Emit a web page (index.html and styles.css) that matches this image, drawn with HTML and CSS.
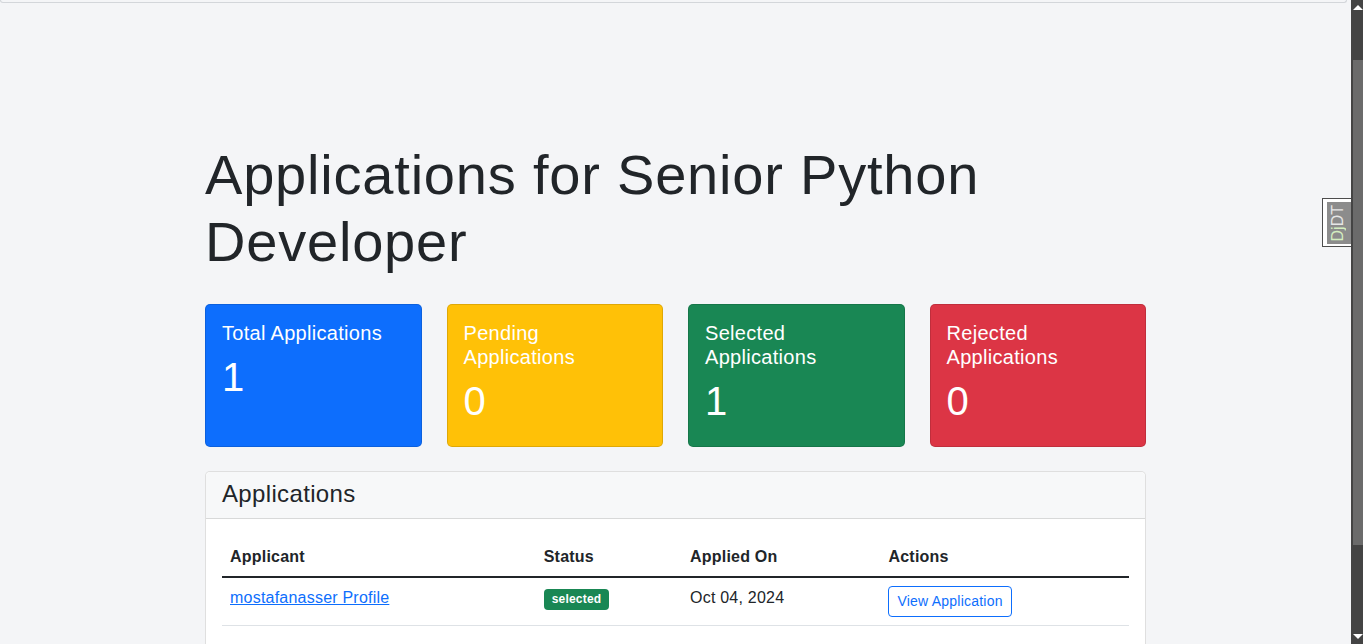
FILE: index.html
```html
<!DOCTYPE html>
<html lang="en">
<head>
<meta charset="utf-8">
<title>Applications for Senior Python Developer</title>
<link rel="stylesheet" href="styles.css">
</head>
<body>
<div class="page">
  <header class="topbar"></header>
  <main class="container">
    <h1 class="page-title">Applications for Senior Python Developer</h1>
    <section class="stats">
      <div class="stat stat-blue">
        <h5 class="stat-title">Total Applications</h5>
        <p class="stat-num">1</p>
      </div>
      <div class="stat stat-yellow">
        <h5 class="stat-title">Pending Applications</h5>
        <p class="stat-num">0</p>
      </div>
      <div class="stat stat-green">
        <h5 class="stat-title">Selected Applications</h5>
        <p class="stat-num">1</p>
      </div>
      <div class="stat stat-red">
        <h5 class="stat-title">Rejected Applications</h5>
        <p class="stat-num">0</p>
      </div>
    </section>
    <section class="panel">
      <div class="panel-header"><h4 class="panel-title">Applications</h4></div>
      <div class="panel-body">
        <table class="apps">
          <colgroup>
            <col class="c1"><col class="c2"><col class="c3"><col class="c4">
          </colgroup>
          <thead>
            <tr><th>Applicant</th><th>Status</th><th>Applied On</th><th>Actions</th></tr>
          </thead>
          <tbody>
            <tr>
              <td><a href="#" class="link">mostafanasser Profile</a></td>
              <td><span class="badge">selected</span></td>
              <td>Oct 04, 2024</td>
              <td><a href="#" class="btn-outline">View Application</a></td>
            </tr>
          </tbody>
        </table>
      </div>
    </section>
  </main>
  <div class="djdt"><div class="djdt-btn"><span class="djdt-text"><span class="djdt-d">Dj</span>DT</span></div></div>
</div>
<aside class="scrollbar">
  <div class="sb-btn"><span class="arrow-up"></span></div>
  <div class="sb-track">
    <div class="sb-thumb"></div>
  </div>
  <div class="sb-btn"><span class="arrow-down"></span></div>
</aside>
</body>
</html>
```

FILE: styles.css
```css
* { box-sizing: border-box; }
html, body { height: 100%; }
body {
  margin: 0;
  display: flex;
  overflow: hidden;
  background: #f4f5f7;
  color: #212529;
  font-family: "Liberation Sans", Arial, sans-serif;
  font-size: 16px;
  line-height: 1.5;
}
.page {
  position: relative;
  flex: 1;
  min-width: 0;
  height: 100%;
  overflow: hidden;
}
.topbar {
  height: 3px;
  margin-right: 4px;
  border: 1px solid #d3d6da;
  border-top: 0;
  border-radius: 0 0 5px 5px;
}
.container {
  width: 941px;
  margin: 0 auto;
  padding: 138px 0 110px;
}
.page-title {
  margin: 0 0 29px;
  font-size: 56px;
  font-weight: 300;
  line-height: 1.2;
  letter-spacing: 0.8px;
}
.stats {
  display: grid;
  grid-template-columns: repeat(4, 1fr);
  gap: 25px;
  margin-bottom: 24px;
}
.stat {
  color: #fff;
  border: 1px solid rgba(0,0,0,0.125);
  border-radius: 5px;
  padding: 16px 16px 21px 16px;
}
.stat-blue { background: #0d6efd; }
.stat-yellow { background: #ffc107; }
.stat-green { background: #198754; }
.stat-red { background: #dc3545; }
.stat-title {
  margin: 0 0 8px;
  font-size: 20px;
  font-weight: 400;
  line-height: 1.2;
  letter-spacing: 0.3px;
}
.stat-num {
  margin: 2px 0 0;
  font-size: 40px;
  line-height: 1.2;
}
.panel {
  background: #fff;
  border: 1px solid rgba(0,0,0,0.125);
  border-radius: 5px;
}
.panel-header {
  background: #f7f8f9;
  border-bottom: 1px solid rgba(0,0,0,0.125);
  padding: 8px 16px 9px;
  border-radius: 5px 5px 0 0;
}
.panel-title {
  margin: 0;
  font-size: 24px;
  font-weight: 400;
  line-height: 1.2;
  letter-spacing: 0.35px;
}
.panel-body { padding: 18px 16px 40px; }
.apps {
  width: 100%;
  border-collapse: collapse;
  table-layout: fixed;
}
.c1 { width: 313px; }
.c2 { width: 146px; }
.c3 { width: 198px; }
.c4 { width: 248px; }
.apps th, .apps td {
  padding: 8px;
  text-align: left;
  vertical-align: top;
  border-bottom: 1px solid #dee2e6;
  letter-spacing: 0.22px;
}
.apps th { font-weight: 700; padding-bottom: 7px; }
.apps thead th { border-bottom: 2px solid #212529; }
.link { color: #0d6efd; text-decoration: underline; }
.badge {
  display: inline-block;
  background: #198754;
  color: #fff;
  font-size: 12px;
  font-weight: 700;
  line-height: 1;
  padding: 4px 8px 5px;
  border-radius: 4px;
  letter-spacing: 0.2px;
}
.btn-outline {
  display: inline-block;
  color: #0d6efd;
  border: 1px solid #0d6efd;
  border-radius: 4px;
  padding: 4px 8px;
  font-size: 14px;
  line-height: 1.5;
  text-decoration: none;
}
.djdt {
  position: absolute;
  top: 198px;
  right: 0;
  width: 29px;
  height: 49px;
  background: #fff;
  border: 1px solid #4d4d4d;
  border-right: 0;
  padding: 3px 0 2px 4px;
}
.djdt-btn {
  height: 100%;
  background: #8c8c8c;
  display: flex;
  align-items: center;
  justify-content: center;
  padding-right: 2px;
}
.djdt-text {
  writing-mode: vertical-rl;
  transform: rotate(180deg);
  font-size: 16px;
  line-height: 1;
  color: #e6e6e6;
}
.djdt-d { color: #d4eec0; }

.scrollbar {
  width: 12px;
  flex: none;
  height: 100%;
  background: #444;
  display: flex;
  flex-direction: column;
}
.sb-btn {
  height: 15px;
  display: flex;
  align-items: center;
  justify-content: center;
  padding-left: 2px;
}
.arrow-up {
  width: 0; height: 0;
  border-left: 5px solid transparent;
  border-right: 5px solid transparent;
  border-bottom: 5px solid #fff;
}
.arrow-down {
  width: 0; height: 0;
  border-left: 5px solid transparent;
  border-right: 5px solid transparent;
  border-top: 5px solid #fff;
}
.sb-track {
  flex: 1;
  padding: 45px 0 0 2px;
}
.sb-thumb {
  height: 485px;
  background: #6b6b6b;
}
```
